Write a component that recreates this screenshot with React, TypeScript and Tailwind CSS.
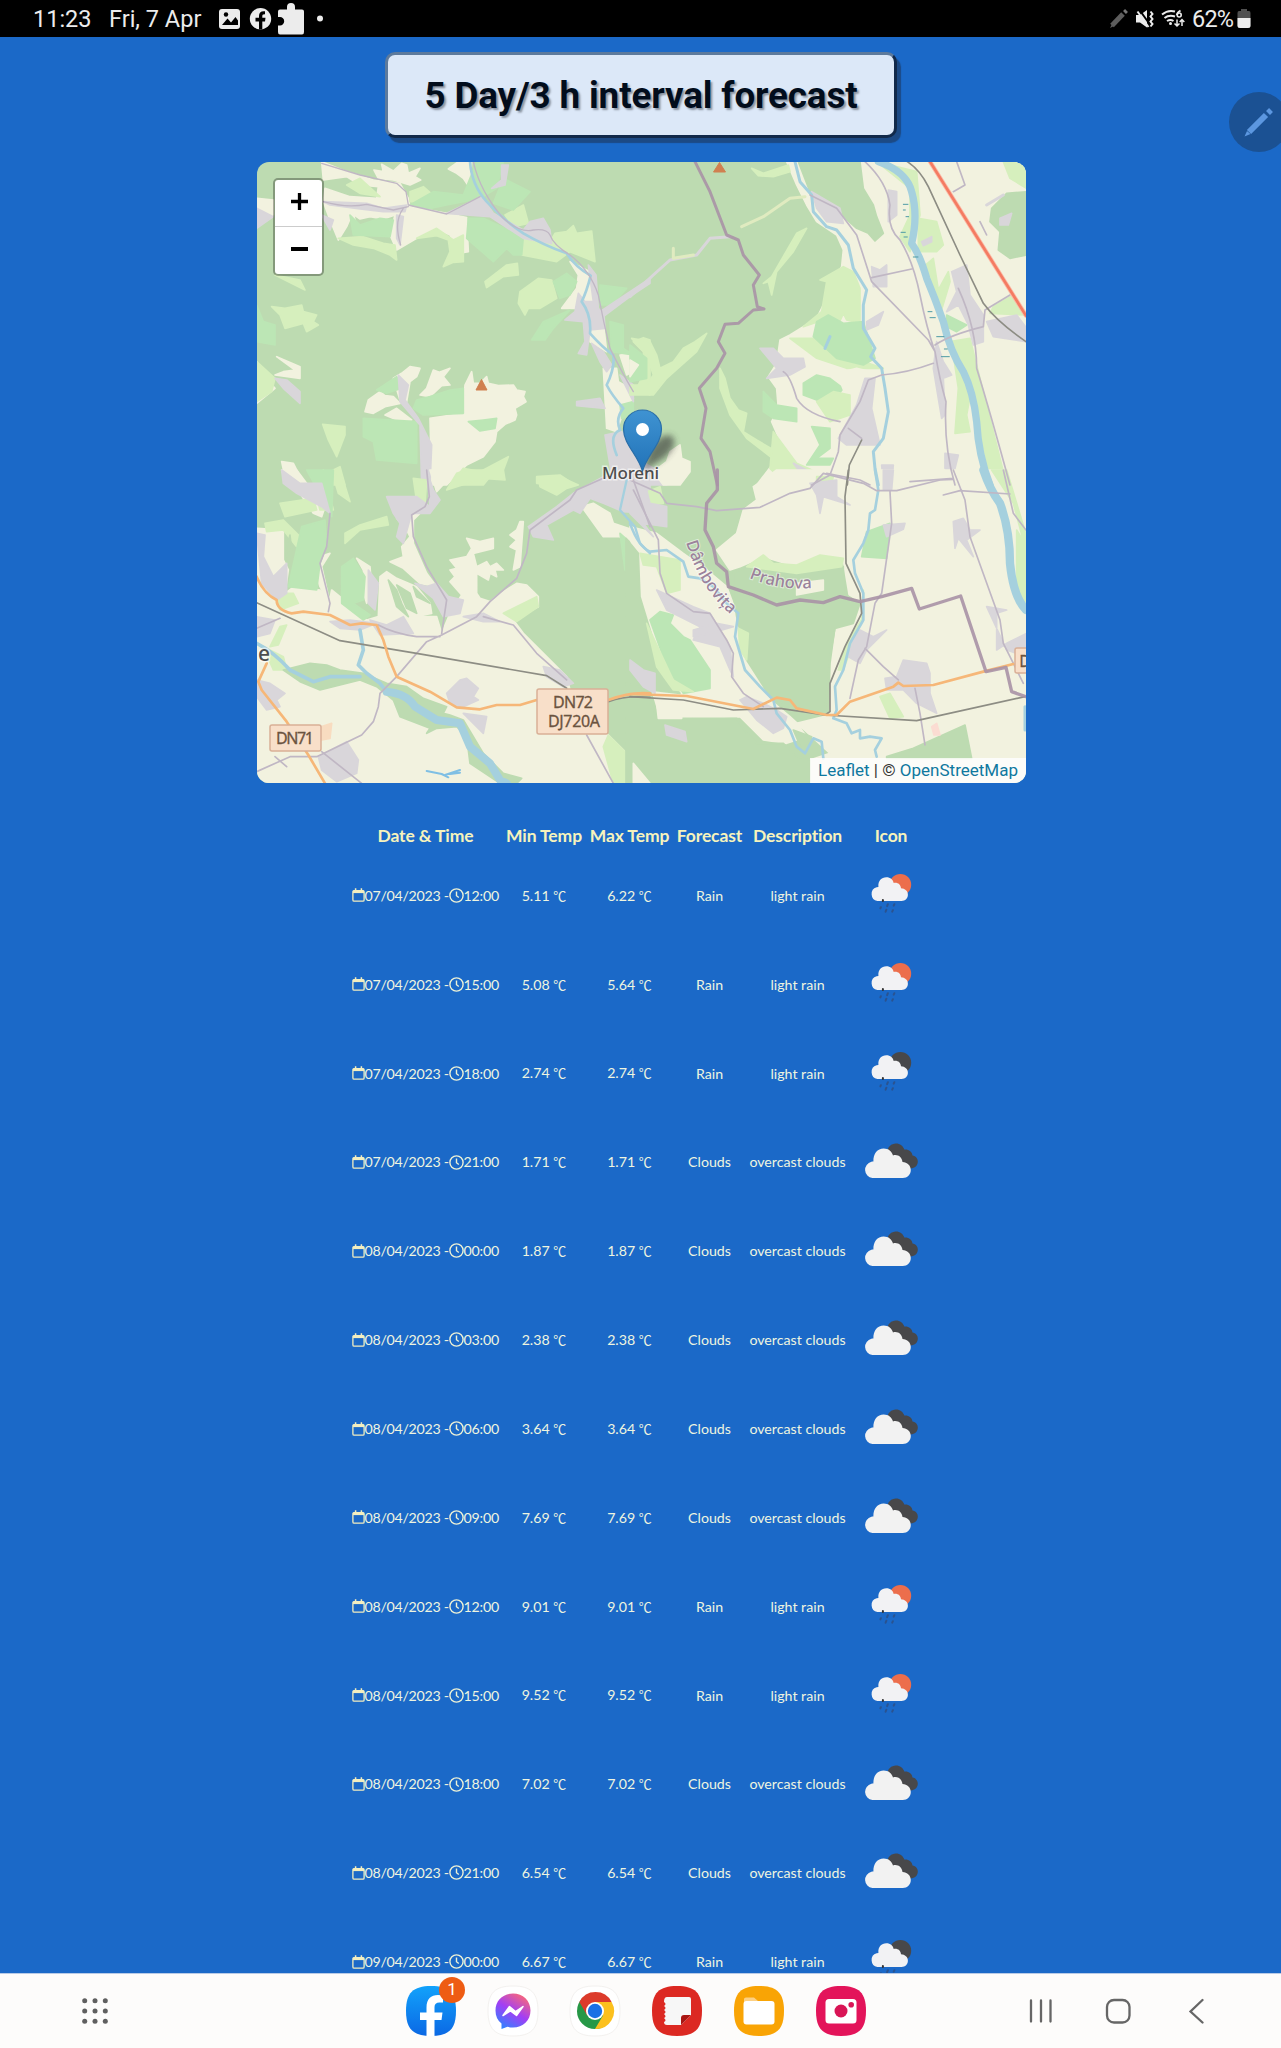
import React from "react";

type Shape = { c: string; d: string };
type Line = { c: string; w: number; d: string; o?: number };

const FOREST = "#bddbb1";
const FIELD = "#f2f2df";
const GRASS = "#d6efbd";
const ORCHARD = "#bce6b5";
const TOWN = "#d9d6da";
const WATER = "#a5d0de";
const ROAD = "#c0b7c4";
const MAIN = "#f6b778";
const RAIL = "#8d8d84";
const BORDER = "#a892a6";

// Land use, by map quadrant
const nwAreas: Shape[] = [
  { c: FIELD, d: "M215 20L290 50 370 75 450 85 475 130 480 155 590 175 650 188 655 290 625 295 612 262 600 240 560 222 500 250 440 285 420 240 435 180 400 192 360 185 330 192 310 178 318 205 305 180 290 215 265 255 240 195 220 140 225 100 300 125 380 130 385 95 330 90 290 65 220 75Z" },
  { c: FIELD, d: "M372 45L400 50 395 28 430 48 455 25 470 30 475 55 510 40 495 65 512 75 480 90 430 75 385 70ZM595 42L625 20 665 20 660 100 640 70 620 55Z" },
  { c: FIELD, d: "M20 130L70 135 70 180 20 190ZM80 605L150 635 150 670 75 660 100 650 135 645ZM20 620L40 660 75 700 20 745Z" },
  { c: FIELD, d: "M430 670L455 655 480 635 510 640 500 665 480 680 470 740 450 735ZM530 700L550 645 568 652 600 640 580 665 600 690 575 692 540 725 510 720 525 705ZM345 770L355 735 390 710 405 722 430 725 450 745 405 755 370 775ZM405 780L440 760 485 795 465 805Z" },
  { c: FIELD, d: "M645 690L665 650 670 685 690 685 710 665 715 685 745 692 790 690 800 705 825 710 820 725 828 740 795 760 800 780 795 795 765 808 740 830 735 860 700 905 650 930 620 960 590 990 545 990 540 790 640 775Z" },
  { c: FIELD, d: "M960 320L1020 350 1030 420 1030 450 975 460 935 460 980 400 985 360ZM1020 520L1062 520 1070 590 1020 560ZM1060 640L1100 640 1105 680 1140 700 1150 730 1120 770 1100 830 1070 820ZM1110 600L1135 598 1165 620 1165 640 1130 660Z" },
  { c: FIELD, d: "M95 920L130 925 150 965 170 990 110 990Z" },
  { c: GRASS, d: "M265 250L340 245 400 265 435 270 440 315 420 300 370 280 310 270ZM500 250L560 220 610 255 640 240 640 320 610 322 580 335 600 290 595 255 560 242ZM480 110L520 95 560 130 530 145 480 140ZM290 90L330 70 390 125 330 115Z" },
  { c: GRASS, d: "M765 180L820 150 835 205 790 215ZM820 245L900 260 915 235 950 230 970 212 980 235 1000 232 1025 228 1035 320 960 290 920 320 815 300ZM705 380L770 330 802 325 805 360 760 365 710 398ZM805 445L810 410 865 370 905 375 920 430 870 460 835 460 825 480Z" },
  { c: GRASS, d: "M75 360L150 375 165 405ZM65 455L105 460 155 450 160 470 200 480 190 500 205 510 170 530 160 505 105 520 90 480ZM218 808L285 815 285 840 260 905 235 855ZM600 990L640 940 690 950 775 905 760 945 720 965 700 990ZM860 965L930 960 960 980 930 990 860 985ZM20 620L75 670 65 710 20 740ZM250 945L270 935 285 990 250 990ZM1150 560L1180 548 1200 555 1200 720 1160 700 1185 650 1180 590Z" },
  { c: ORCHARD, d: "M680 20L760 20 740 100 690 130 590 150 540 160 480 150 550 110 640 120ZM655 190L700 190 820 245 815 300 790 300 770 280 730 320 650 250ZM760 70L840 110 790 165 730 145ZM300 180L330 210 390 190 430 195 420 245 310 240ZM910 380L950 355 980 380 960 420 930 430ZM845 555L880 500 960 465 910 520 885 555ZM20 450L40 500 75 510 75 570 20 560Z" },
  { c: ORCHARD, d: "M380 705L440 665 455 700 410 715ZM500 735L540 725 600 705 640 700 640 775 520 780 490 760ZM340 790L500 800 500 925 380 915 370 860 340 845ZM655 800L700 795 740 790 735 820 690 828ZM1050 390L1130 400 1085 450 1050 450ZM1080 500L1120 510 1120 580 1150 600 1085 590ZM1110 750L1150 740 1150 780 1115 790Z" },
  { c: TOWN, d: "M755 30L775 30 765 90 725 100 755 75ZM590 175L695 125 730 175 820 225 840 200 880 190 900 225 905 265 820 250 720 185ZM220 140L350 145 400 160 470 150 465 170 400 170 330 162 240 150ZM20 160L70 185 20 220ZM215 180L250 195 240 225ZM440 180L460 185 450 270 440 250ZM75 670L110 675 150 710 150 745 100 700ZM445 660L475 690 465 735 505 790 545 870 540 990 515 990 510 810 450 740Z" },
  { c: TOWN, d: "M1015 330L1038 360 1045 460 1062 480 1065 520 1020 525 1010 600 985 595 1005 560 1000 500 945 495 975 470 985 415 1005 440 1030 440ZM1025 565L1060 590 1085 630 1070 650 1050 620ZM1110 660L1150 690 1150 740 1140 720ZM980 740L1050 730 1065 760 980 752ZM1065 840L1115 830 1180 900 1200 990 1090 990ZM1050 470L1140 410 1200 370 1200 385 1140 425 1060 485Z" },
];

const neAreas: Shape[] = [
  { c: FIELD, d: "M470 20L500 90 530 150 560 200 620 240 640 285 635 335 610 380 590 430 560 490 520 515 480 540 450 555 440 625 415 665 440 700 445 760 425 800 460 880 430 925 380 990 1190 990 1190 20Z" },
  { c: FOREST, d: "M505 20L690 20 700 100 730 150 740 185 760 235 735 258 715 235 680 220 640 185 580 130 540 110ZM1130 115L1190 110 1190 300 1140 310 1105 285 1110 230 1080 200 1085 160Z" },
  { c: GRASS, d: "M365 40L400 55 475 30 480 50 430 65 385 62ZM640 335L670 350 690 400 690 505 650 495 640 475 620 520 580 495 520 515 575 470 590 380 570 375ZM500 235L530 220 490 290 440 350 425 420 415 380 400 385 425 365Z" },
  { c: GRASS, d: "M5 550L60 560 80 600 90 640 130 620 160 580 195 560 230 535 200 590 110 670 70 720 0 720 0 690 50 690 70 660 50 600ZM270 640L285 670 300 730 325 765 350 775 340 830 380 855 440 890 440 920 350 850 300 780 270 700ZM480 550L550 550 620 600 700 620 760 640 650 640 560 610ZM740 20L860 50 870 180 840 290 810 245 840 180 840 100ZM865 190L920 200 940 270 920 290 865 290ZM875 340L910 310 925 405 955 350 960 380 930 480 900 410ZM970 600L1030 670 1010 780 1020 830 975 835 985 700ZM960 560L1020 550 1130 990 1085 990 1040 780ZM1090 455L1150 420 1185 480 1080 475ZM1120 20L1190 20 1190 100 1140 70Z" },
  { c: ORCHARD, d: "M595 480L640 505 700 500 735 610 700 630 620 610 550 545 560 500ZM0 570L50 610 50 670 0 680ZM520 685L560 660 600 670 640 700 600 750 520 720ZM400 710L440 750 500 760 500 800 430 790 400 770ZM545 815L600 820 600 880 560 910 610 910 600 930 530 930 570 870ZM950 480L1010 510 980 530 950 515Z" },
  { c: FIELD, d: "M620 655L680 640 720 650 710 690 650 730 635 690Z" },
  { c: GRASS, d: "M560 740L610 710 660 720 660 780 600 800ZM430 830L500 925 580 960 450 970 420 940Z" },
  { c: TOWN, d: "M545 110L630 160 640 205 590 200 560 160ZM775 105L800 110 800 180 775 200ZM725 335L750 345 770 330 770 395 730 395ZM710 500L760 470 745 510 710 525ZM390 580L430 580 460 610 520 610 525 635 480 660 410 670 440 640ZM965 350L1010 330 1020 420 1060 480 1060 560 1030 570 1015 510 985 450 950 470 980 410ZM1070 500L1160 480 1190 520 1190 560 1090 545ZM705 670L735 670 725 760 750 870 650 870 625 850 680 750ZM920 560L910 640 935 790 945 780 940 670 965 660 940 620ZM490 925L560 960 540 990ZM755 930L790 930 785 990 760 990ZM945 895L985 900 970 960 945 940Z" },
  { c: TOWN, d: "M0 900L90 950 110 990 0 990ZM1110 190L1145 175 1135 210 1110 210ZM875 260L905 245 905 260 880 272Z" },
  { c: FIELD, d: "M0 615L25 630 0 665ZM70 950L110 920 120 890 150 870 155 910 180 920 180 950 150 990 100 990Z" },
];

const swAreas: Shape[] = [
  { c: FIELD, d: "M20 175L100 180 100 270 115 300 105 370 145 340 170 355 210 360 240 385 245 360 270 380 310 425 350 450 385 440 390 320 410 305 440 325 500 350 540 400 545 430 490 440 560 440 575 490 600 430 635 375 600 335 615 320 600 300 620 295 600 270 650 260 665 235 650 205 690 215 730 205 730 235 670 250 680 290 710 275 720 290 740 280 760 300 735 300 740 320 720 310 715 330 680 310 680 370 690 385 720 395 745 375 800 340 830 345 865 380 865 410 790 450 820 490 950 620 960 660 1075 795 1130 850 1160 940 20 940Z" },
  { c: FIELD, d: "M95 0L140 0 200 80 225 110 215 140 190 130 150 70 110 45ZM210 260L240 250 215 290 240 400 210 350 195 300ZM440 145L530 110 490 150 490 220 530 310 560 350 510 340 460 295 420 275 460 260 455 230 480 200 470 180ZM320 265L360 290 365 360 350 400 335 350 340 300ZM540 0L620 0 560 65ZM780 195L800 180 810 155 820 155 810 290 790 300 800 240 780 230 800 210ZM995 110L1030 100 1080 130 1090 160 1150 180 1200 250 1200 440 1165 380 1170 290 1110 200 1060 200Z" },
  { c: GRASS, d: "M90 100L190 85 200 120 105 140ZM45 160L100 150 150 200 140 230 100 180 50 185ZM250 20L270 0 300 95 265 70ZM285 190L330 165 410 140 415 165 330 180 285 220ZM490 25L530 30 525 105 500 95ZM590 60L620 10 650 0 760 0 765 30 700 25ZM865 25L930 20 985 45 950 55 920 75 870 50ZM80 370L130 370 145 400 90 420 80 400ZM60 530L90 470 110 465 85 525ZM760 430L860 380 865 410 800 455ZM40 530L100 560 110 600 70 600ZM1075 795L1130 850 1160 940 1090 940 1060 830ZM200 80L220 0 250 120 210 120Z" },
  { c: ORCHARD, d: "M155 170L225 150 230 225 210 280 200 360 115 350 135 260ZM170 0L250 0 245 140 220 90ZM275 290L310 265 345 320 340 390 310 400 360 435 340 450 275 400ZM1110 190L1155 230 1170 340 1125 300Z" },
  { c: FOREST, d: "M100 600L180 580 230 585 270 600 340 610 410 640 470 650 520 685 590 710 580 730 600 735 640 750 700 850 760 910 815 925 800 940 750 940 660 880 650 800 620 770 560 775 530 790 540 775 450 740 430 690 380 650 330 630 210 660 150 635ZM415 330L440 360 455 400 475 440 440 410ZM440 345L480 370 500 430 470 415ZM108 240L120 195 125 240 110 260ZM490 350L540 400 500 380Z" },
  { c: TOWN, d: "M20 190L45 195 40 260 70 320 110 280 110 370 80 390 35 340ZM95 0L150 40 215 40 240 130 215 110 140 70 100 40ZM410 80L500 80 540 110 530 0 550 60 570 90 540 130 485 130 460 220 440 200 450 160 430 130ZM355 300L385 340 375 420 355 400ZM495 340L530 350 560 340 595 380 640 390 630 430 580 440 550 385ZM360 450L410 465 460 440 490 490 390 495ZM20 440L75 450 60 490 20 500ZM240 455L300 450 380 460 330 480 270 475ZM640 440L700 430 750 455 700 455ZM590 670L630 630 650 625 685 655 670 680 685 690 630 715 600 700ZM640 730L710 740 700 790 670 760ZM20 630L60 640 105 670 80 690 90 710 50 720 20 680ZM205 860L290 815 325 870 320 910 260 935 215 900ZM835 170L920 110 970 70 1060 20 1200 0 1200 130 1120 125 1060 100 1020 85 990 130 970 120 890 165 910 210 850 200ZM880 590L930 600 970 640 940 650 890 620ZM1135 570L1200 590 1200 660 1160 620Z" },
  { c: "#f8dcc0", d: "M215 770L245 760 240 805 215 810Z" },
];

const seAreas: Shape[] = [
  { c: FIELD, d: "M440 0L1190 0 1190 940 540 940 540 870 600 850 480 740 420 690 330 480 320 430 290 350 230 300 160 250 80 190 40 180 0 170 10 300 30 420 60 640 90 740 160 745 330 740 400 810 470 820 530 800 500 760 600 735 605 580 620 470 670 460 665 420 640 270 600 260 500 290 400 260 330 290 300 300 260 240 320 190 340 120 380 90 370 50 400 30Z" },
  { c: FOREST, d: "M310 310L390 275 500 300 640 290 640 370 690 400 670 460 615 475 600 560 585 720 500 720 420 680 350 570 320 440 310 370ZM-12 205L25 250 30 380 100 610 150 670 60 660 -12 640ZM-12 640L60 660 60 700 85 745 320 745 350 790 380 820 460 820 500 860 540 870 540 940 -12 940ZM770 860L850 835 1005 765 1025 865 770 865ZM490 780L545 800 520 850Z" },
  { c: FIELD, d: "M10 880L60 940 10 940ZM80 700L155 690 155 745 85 745ZM500 340L580 330 580 360 500 375Z" },
  { c: ORCHARD, d: "M60 450L90 425 130 435 120 460 160 500 180 510 240 600 240 655 160 670 110 590ZM710 185L780 160 770 265 695 260Z" },
  { c: GRASS, d: "M30 250L150 270 150 360 110 370 80 290 40 285ZM50 460L130 630 190 665 130 660 80 590ZM325 475L355 490 350 570 330 540ZM560 20L610 20 600 55 560 40ZM350 290L400 255 430 280 500 285 570 255 640 265 635 290 500 310ZM650 520L700 440 700 360 695 450 640 600 625 600ZM1085 0L1130 0 1190 200 1190 250 1150 100ZM750 680L780 670 820 740 780 745ZM1160 180L1190 230 1190 420 1160 340ZM40 70L90 50 100 100 50 105Z" },
  { c: TOWN, d: "M0 0L40 20 60 100 110 110 110 170 40 160 70 200 0 130ZM80 360L190 410 240 430 300 530 310 620 300 600 270 530 190 510 210 470 110 420ZM350 680L400 700 440 720 470 740 460 775 430 790 380 750 330 690ZM190 480L260 460 310 470 240 490 190 500ZM0 570L40 600 75 610 75 670 40 650 0 600ZM105 765L165 785 170 815 110 795ZM540 40L620 30 620 80 660 105 580 80 570 130 560 75ZM690 480L730 500 770 480 710 540 690 580 655 560 670 510ZM765 625L800 620 820 570 890 580 900 610 900 670 920 730 860 700 820 660 770 660ZM970 155L1000 145 1020 180 1050 180 1010 210 1030 260 985 205 975 235ZM760 165L825 160 820 178 770 200ZM760 0L790 0 785 60 760 60ZM1070 410L1130 420 1100 430 1100 540 1130 520 1190 490 1190 560 1130 540Z" },
  { c: "#fbdcd2", d: "M905 770L920 760 930 795 912 795Z" },
];

// Rivers, roads, rails and borders, by map quadrant
const nwLines: Line[] = [
  { c: WATER, w: 8, d: "M660 20Q665 90 710 140 760 195 820 235 880 270 950 295 975 335 1022 362 1010 410 995 440 1025 480 1020 535 1060 580 1090 600 1095 640 1070 690 1085 720 1120 760 1095 790 1110 825 1075 840 1100 900 1110 990" },
  { c: ROAD, w: 4, d: "M215 25L330 60 440 85 468 110 475 150 590 177 690 125M220 140Q290 160 350 148L430 165 475 155M460 160Q430 200 452 270M670 20Q690 110 760 190 810 235 850 225 890 220 900 240 910 270 960 300 1020 345 1045 420 1060 500 1080 580 1120 660 1150 710 1155 765M590 178L700 185M1000 485L1060 475 1200 380M1065 640Q1050 700 1060 750L1075 870M455 660L475 715 455 740 515 800 525 900 535 990M1115 880L1200 990" },
];
const neLines: Line[] = [
  { c: WATER, w: 9, d: "M495 20L510 80 545 120 550 170 590 215 620 225 655 270 670 340 710 405 700 450 700 520 735 580 722 605 755 640 765 700 775 770 760 850 730 890 735 940 745 990M600 545L585 580" },
  { c: WATER, w: 22, d: "M745 20Q830 50 845 110 865 180 845 265 870 300 890 370 915 430 940 500 960 590 1000 650 1030 710 1040 800 1045 900 1080 990" },
  { c: ROAD, w: 5, d: "M705 20Q770 80 780 150 770 220 810 255 850 320 870 420 890 520 915 590 930 680 948 740 940 870 975 990M540 120L620 160 680 240 725 380 895 555 915 590M725 368L845 342M755 660Q830 655 910 625M915 570Q960 540 1060 515L1065 465 1140 420M630 800Q530 780 500 730 480 660 460 650M985 400Q1040 520 1040 640 1080 770 1140 990M755 660L715 675 690 740 630 840 625 890 600 960 545 990M655 820L695 850M590 955L690 975 720 990M970 970L840 980M980 20L1005 90 970 110M1070 240L1050 200" },
  { c: TOWN, w: 9, d: "M0 425L70 360 120 315 200 300 240 250 300 245M1070 150L1120 120" },
  { c: "#e0ebc0", w: 9, d: "M335 215L400 185 480 130 525 125M130 280V310L190 300" },
  { c: RAIL, w: 5, d: "M832 20Q870 45 895 95L990 300 1060 445Q1100 500 1188 560M695 855L658 930 652 990" },
  { c: "#fbbaa6", w: 13, d: "M900 20L1188 482" },
  { c: "#f47b62", w: 8, d: "M900 20L1188 482" },
  { c: BORDER, w: 9, o: 0.9, d: "M195 20L240 110 290 240 325 255 340 300 388 360 370 390 382 455 402 462 370 465 325 505 285 508 265 560 285 595 260 640 208 700 228 760 213 850 240 890 262 990" },
  { c: "#4d9ba5", w: 3, d: "M820 148H834M820 165H826M828 185H836M813 232H826M822 246H832M850 306H864M894 470H906M900 488H916M920 545H942M943 582H952M934 605H958" },
];
const swLines: Line[] = [
  { c: WATER, w: 11, d: "M20 520Q70 545 120 600L190 635 240 620 330 620M330 480L340 540 325 585 350 610 390 640 410 665" },
  { c: WATER, w: 24, d: "M410 665Q470 670 495 710L560 750 630 760 660 830 720 880 750 930 770 940" },
  { c: WATER, w: 7, d: "M1130 30L1110 120 1155 170 1170 220 1200 250" },
  { c: ROAD, w: 5, d: "M530 0L538 80 525 110 485 135 490 200 530 290 590 390 575 490M1070 20L980 60 960 90 840 180 830 250 800 325 720 395 680 440 575 495 530 515 440 620 390 670 385 710 370 755 335 795 200 860 120 860 20 905M240 130L230 230 210 280 240 400 235 425M385 465Q430 490 500 500L570 500M700 440L790 465 860 550 950 630M1010 795L1090 940M215 845L335 940M20 475L90 445M75 860L110 890M1150 30L1200 170" },
  { c: RAIL, w: 5, d: "M20 398L270 512 500 550 890 617 950 655M1075 695Q1130 675 1200 682" },
  { c: MAIN, w: 8, d: "M20 320Q40 370 80 390 80 420 125 430L160 425 240 435 300 465 335 460 380 465 400 510 415 560 440 620 540 665 620 712 690 718 740 705 810 705 860 690M50 580L25 635 35 660 110 755 175 855 225 940M1075 690Q1140 665 1200 670" },
  { c: "#7fbfe4", w: 6, d: "M530 903L575 912 595 922M585 915L630 900M600 912L630 908" },
];
const seLines: Line[] = [
  { c: WATER, w: 8, d: "M0 160Q25 230 60 245L110 240 160 275 175 320 210 325 250 350 290 400 325 430 315 500 345 600 390 650 430 690 440 730 480 780 500 830 525 850 550 805 575 815 580 865M735 0L745 60 735 120 720 130 715 180 700 220 670 270 675 310 700 370 700 450 660 520 640 600 615 650 620 720 610 745 650 760 665 790 690 780 690 805 720 800 755 805 735 840 740 860" },
  { c: WATER, w: 25, d: "M1060 0Q1080 60 1110 100 1140 180 1140 280 1150 380 1188 420" },
  { c: WATER, w: 9, d: "M1185 710V780" },
  { c: ROAD, w: 5, d: "M10 60L50 140 85 210 90 310 110 370 190 425 240 430 290 510 310 550 305 620 340 670 400 710M0 30L90 70 110 100 200 110 260 122 390 112 480 70 540 55 580 10 700 40 740 62 800 62 930 30 970 28M970 0L1005 90 1020 200 1110 450 1120 520 1180 640M780 65L785 160 755 370 735 400 710 530 685 570 660 685M705 535L760 590 805 630M855 655L870 730 885 825M940 75L990 62 1140 72M1120 0L1150 130 1188 180" },
  { c: RAIL, w: 5, d: "M655 0L645 80 648 280 690 370 695 430 645 530 600 640 600 725 585 735 450 715 310 720 160 690 0 680M585 735L860 752 1185 680" },
  { c: MAIN, w: 8, d: "M0 672L170 678 370 717 440 683 480 690 500 715 590 735 620 735 660 695 790 650 805 638 820 648 910 645 1060 605 1150 582" },
  { c: BORDER, w: 10, o: 0.9, d: "M262 0L262 60 230 100 225 180 250 230 260 280 290 305 295 350 370 375 440 405 510 390 580 398 630 380 690 395 755 380 845 355 868 417 992 378 1068 605 1128 592 1145 665 1188 680" },
];

const quads = [
  { t: "translate(0 0)", areas: nwAreas, lines: nwLines },
  { t: "translate(1140 0)", areas: neAreas, lines: neLines },
  { t: "translate(0 945)", areas: swAreas, lines: swLines },
  { t: "translate(1140 945)", areas: seAreas, lines: seLines },
];

function MapArt() {
  return (
    <svg className="block h-[621px] w-[769px]" viewBox="257 162 769 621">
      <defs>
        <linearGradient id="pin" x1="0" y1="0" x2="0" y2="1">
          <stop offset="0" stopColor="#3f93d2" />
          <stop offset="1" stopColor="#2273b8" />
        </linearGradient>
        <filter id="soft" x="-50%" y="-50%" width="200%" height="200%">
          <feGaussianBlur stdDeviation="3" />
        </filter>
        <path id="dambovita" d="M686 542Q699 587 729 613" />
        <path id="prahova" d="M749 578Q780 591 814 588" />
      </defs>
      <rect x="257" y="162" width="769" height="621" fill={FOREST} />
      <g transform="translate(250 155) scale(0.33333)">
        {quads.map((q) => (
          <g key={q.t} transform={q.t}>
            {q.areas.map((a, i) => (
              <path key={i} d={a.d} fill={a.c} stroke={a.c} strokeWidth="5" strokeLinejoin="round" />
            ))}
          </g>
        ))}
        {quads.map((q) => (
          <g key={q.t} transform={q.t} fill="none" strokeLinejoin="round" strokeLinecap="round">
            {q.lines.map((l, i) => (
              <path key={i} d={l.d} stroke={l.c} strokeWidth={l.w} opacity={l.o ?? 1} />
            ))}
          </g>
        ))}
      </g>
      <path d="M476 390L481.500 379.500 487 390ZM713.500 172L719.500 162.500 725.500 172Z" fill="#d08050" stroke="#d08050" strokeWidth="1" />
      <g fill="#f8dfc9" stroke="#d9b097" strokeWidth="1.500">
        <rect x="537" y="689" width="71" height="45" rx="2" />
        <rect x="270" y="725" width="51" height="26" rx="2" />
        <rect x="1015" y="648" width="30" height="25" rx="2" />
      </g>
      <g fontFamily="'Noto Sans', sans-serif" fill="#6b5340" stroke="#6b5340" strokeWidth="0.300" fontSize="16" textAnchor="middle">
        <text x="573" y="708" textLength="40">DN72</text>
        <text x="574" y="727" textLength="52">DJ720A</text>
        <text x="295" y="744" textLength="38">DN71</text>
        <text x="1025" y="667">D</text>
      </g>
      <g fontFamily="'Noto Sans', sans-serif" fontWeight="500" fill="#4d4d4d" stroke="#fff" strokeOpacity="0.6" strokeWidth="3" paintOrder="stroke">
        <text x="602" y="479" fontSize="17" textLength="57">Moreni</text>
        <text x="258" y="661" fontSize="21">e</text>
      </g>
      <g fontFamily="'Noto Sans', sans-serif" fontSize="16.500" fontWeight="500" fill="#9b829b" stroke="#fff" strokeOpacity="0.5" strokeWidth="2" paintOrder="stroke">
        <text><textPath href="#dambovita">Dâmbovița</textPath></text>
        <text><textPath href="#prahova">Prahova</textPath></text>
      </g>
      <path d="M643 471L650 448Q662 432 672 436 679 445 664 458Z" fill="#333" opacity="0.6" filter="url(#soft)" />
      <path d="M642.500 471C638 455 623.500 444 623.500 429a19 19 0 0 1 38 0C661.500 444 647 455 642.500 471Z" fill="url(#pin)" stroke="#2a6ea8" strokeWidth="1.200" />
      <circle cx="642.500" cy="429.500" r="6.500" fill="#fff" />
    </svg>
  );
}

function RainIcon({ night }: { night: boolean }) {
  return (
    <svg className="block h-[88.86px] w-[83px]" viewBox="850.6 851.3 83 88.86">
      <circle cx="901" cy="885" r="10.800" fill={night ? "#48484a" : "#ec6e4c"} />
      <path d="M878 901.200a7 7 0 0 1-.8-13.600 6 6 0 0 1 1.800-.3C878.500 881 882 877.500 887 877.500c4 0 6.500 2.300 7.300 5.700 4-.8 7 1.500 7.300 5.400 4 .2 6.900 2.700 6.900 6.400 0 3.600-2.700 6.200-6.300 6.200Z" fill="#f2f2f4" />
      <path d="M883.500 900.200v1" stroke="#333" strokeWidth="2" strokeLinecap="round" />
      <path d="M888.500 904.500l-.8 2M895 904.500l-.7 1.500M881.500 907.500l-.5 1.200M887 910l-.8 2M893.500 910.500l-.7 1.500" stroke="#2a5390" strokeWidth="2" strokeLinecap="round" />
    </svg>
  );
}

function CloudIcon() {
  return (
    <svg className="block h-[88.86px] w-[83px]" viewBox="850.6 1117.9 83 88.86">
      <path d="M888 1152c0-5 4-8.500 8.500-8.500 4.200 0 7.300 2.600 8.400 6 4.500-.4 7.700 2 8.200 6 3.200.5 5.300 3 5.300 6 0 4-3 6.800-7 6.800h-14Z" fill="#48484a" />
      <path d="M873 1178a8.300 8.300 0 0 1-1-16.300c.6-.2 1.200-.2 2-.2-.3-8 4-13.200 10.300-13.200 4.800 0 8.200 2.800 9.300 7 5-1.300 9 1.700 9.500 6.700 4.800.3 8.300 3.500 8.300 8 0 4.700-3.500 8-8 8Z" fill="#f2f2f2" />
    </svg>
  );
}

type Row = [string, string, string, string, string];
const rows: Row[] = [
  ["07/04/2023", "12:00", "5.11", "6.22", "day"],
  ["07/04/2023", "15:00", "5.08", "5.64", "day"],
  ["07/04/2023", "18:00", "2.74", "2.74", "night"],
  ["07/04/2023", "21:00", "1.71", "1.71", "cloud"],
  ["08/04/2023", "00:00", "1.87", "1.87", "cloud"],
  ["08/04/2023", "03:00", "2.38", "2.38", "cloud"],
  ["08/04/2023", "06:00", "3.64", "3.64", "cloud"],
  ["08/04/2023", "09:00", "7.69", "7.69", "cloud"],
  ["08/04/2023", "12:00", "9.01", "9.01", "day"],
  ["08/04/2023", "15:00", "9.52", "9.52", "day"],
  ["08/04/2023", "18:00", "7.02", "7.02", "cloud"],
  ["08/04/2023", "21:00", "6.54", "6.54", "cloud"],
  ["09/04/2023", "00:00", "6.67", "6.67", "night"],
];

function Calendar() {
  return (
    <svg className="h-[14px] w-[13px] shrink-0" viewBox="0 0 13 14" fill="none" stroke="#f3eec0">
      <rect x="0.900" y="2.600" width="11.200" height="10.600" rx="1.200" strokeWidth="1.300" />
      <path d="M1 3.800H12" strokeWidth="2.600" />
      <path d="M3.600 0.300V3M9.400 0.300V3" strokeWidth="1.500" />
    </svg>
  );
}

function Clock() {
  return (
    <svg className="h-[15px] w-[15px] shrink-0" viewBox="0 0 15 15" fill="none" stroke="#eef2d6" strokeWidth="1.400">
      <circle cx="7.500" cy="7.500" r="6.600" />
      <path d="M7.500 3.500V7.700L9.800 9.500" />
    </svg>
  );
}

function Temp({ value }: { value: string }) {
  return (
    <div>
      {value} <span className="text-[13px]">℃</span>
    </div>
  );
}

function Table() {
  return (
    <div className="flex flex-col font-['Lato','Noto_Sans_CJK_SC',sans-serif] text-[#eef5e0]">
      <div className="grid h-[30px] grid-cols-[154px_83px_88px_72px_104px_83px] items-center text-center text-[17.500px] leading-[30px] font-bold tracking-[-0.100px] whitespace-nowrap text-[#f6f3bd]">
        <div>Date &amp; Time</div>
        <div>Min Temp</div>
        <div>Max Temp</div>
        <div>Forecast</div>
        <div>Description</div>
        <div>Icon</div>
      </div>
      {rows.map(([date, time, min, max, kind]) => (
        <div
          key={date + time}
          className="grid h-[88.86px] shrink-0 grid-cols-[154px_83px_88px_72px_104px_83px] items-center text-center text-[14.200px] whitespace-nowrap"
        >
          <div className="flex items-center pl-[3px]">
            <Calendar />
            <span className="w-[84px] text-left tracking-[-0.280px]">{date} -</span>
            <Clock />
            <span className="tracking-[-0.200px]">{time}</span>
          </div>
          <Temp value={min} />
          <Temp value={max} />
          <div>{kind === "cloud" ? "Clouds" : "Rain"}</div>
          <div>{kind === "cloud" ? "overcast clouds" : "light rain"}</div>
          {kind === "cloud" ? <CloudIcon /> : <RainIcon night={kind === "night"} />}
        </div>
      ))}
    </div>
  );
}

function StatusBar() {
  return (
    <header className="flex h-[37px] shrink-0 items-center justify-between bg-black pr-[30px] pl-[33px] font-['Roboto',sans-serif] text-[23.500px] text-[#ececec]">
      <div className="flex items-center">
        <span className="w-[76px] pt-[2px]">11:23</span>
        <span className="w-[109px] pt-[2px] whitespace-nowrap">Fri, 7 Apr</span>
        <svg className="h-[37px] w-[106px]" viewBox="218 0 106 37">
          <rect x="219" y="9" width="21" height="20" rx="3" fill="#ececec" />
          <path d="M222 25L227.500 18.500 231 22.500 235.500 17 238 20.500V25Z" fill="#000" />
          <circle cx="226" cy="14.500" r="2.200" fill="#000" />
          <circle cx="260.500" cy="18.700" r="10.700" fill="#ececec" />
          <path d="M259 29.500V21.500H255.500V17.800H259V16C259 12.500 261 10.800 265 11.300V14.400C262.800 14.200 262.300 15 262.300 16.500V17.800H265.500L265 21.500H262.300V29.500Z" fill="#000" />
          <path d="M280 9.500H287V7a4 4 0 0 1 8 0V9.500H302Q304 9.500 304 11.500V32Q304 34.500 302 34.500H280Q278 34.500 278 32V25.500H280a4.200 4.200 0 0 0 0-8.400H278V11.500Q278 9.500 280 9.500Z" fill="#ececec" />
          <circle cx="320" cy="18.500" r="3" fill="#ececec" />
        </svg>
      </div>
      <div className="flex items-center">
        <svg className="h-[37px] w-[82px]" viewBox="1110 0 82 37" fill="none" stroke="#ececec" strokeWidth="2">
          <path d="M1112 25.500L1123 14" stroke="#5d5d5d" strokeWidth="5" />
          <path d="M1124.500 12.500L1126.500 10.500" stroke="#777" strokeWidth="4" />
          <path d="M1110 28L1112 24 1114 26Z" fill="#5d5d5d" stroke="none" />
          <path d="M1136 15H1140L1147 10V27.500L1140 22.500H1136Z" fill="#ececec" stroke="none" />
          <path d="M1139.500 10L1151 26" stroke="#000" strokeWidth="2" />
          <path d="M1137.500 11.500L1148.500 27" strokeWidth="2" />
          <path d="M1150.500 11.500L1152.500 14 1150.500 16.500 1152.500 19 1150.500 21.500 1152.500 24 1150.500 26.500" />
          <path d="M1162 14.500Q1168 9.500 1175 11.500M1164.500 18Q1169 14.500 1175 16.500M1167 21Q1170.500 19 1173.500 21M1180.500 10.500Q1177 12.500 1177 15" />
          <circle cx="1179.200" cy="15" r="2" strokeWidth="1.600" />
          <circle cx="1170.500" cy="23.500" r="1.500" fill="#ececec" stroke="none" />
          <path d="M1177 19.500V26M1174.500 23.500L1177 26 1179.500 23.500M1182 26V19.500M1179.700 22L1182 19.500 1184.300 22" strokeWidth="1.500" />
        </svg>
        <span className="w-[45px] pt-[2px] tracking-[-0.800px]">62%</span>
        <svg className="h-[20px] w-[14px]" viewBox="0 0 14 20">
          <path d="M4 0H10V2H12Q13.500 2 13.500 4V16.500Q13.500 19 11 19H3Q0.500 19 0.500 16.500V4Q0.500 2 2 2H4Z" fill="#505050" />
          <path d="M0.500 9H13.500V16.500Q13.500 19 11 19H3Q0.500 19 0.500 16.500Z" fill="#ececec" />
        </svg>
      </div>
    </header>
  );
}

const SQUIRCLE = "M25 0C43 0 50 7 50 25S43 50 25 50 0 43 0 25 7 0 25 0Z";

function AppIcon({ fill, children, edge }: { fill: string; children: React.ReactNode; edge?: boolean }) {
  return (
    <svg className="block h-[50px] w-[50px] overflow-visible" viewBox="0 0 50 50">
      <path d={SQUIRCLE} fill={fill} stroke={edge ? "#f3f1ef" : "none"} />
      {children}
    </svg>
  );
}

function NavBar() {
  return (
    <footer className="flex h-[75px] shrink-0 items-center border-t border-[#b9cbe6] bg-[#fdfcfb] pl-[82px]">
      <svg className="h-[26px] w-[26px]" viewBox="0 0 26 26" fill="#5f5f5f">
        {[2.7, 13, 23.3].map((y) => [2.7, 13, 23.3].map((x) => <circle key={`${x}-${y}`} cx={x} cy={y} r="2.500" />))}
      </svg>
      <div className="ml-[298px] flex gap-8">
        <div className="relative">
          <AppIcon fill="url(#fb)">
            <defs>
              <linearGradient id="fb" x1="0" y1="0" x2="0" y2="1">
                <stop offset="0" stopColor="#12a2fb" />
                <stop offset="1" stopColor="#0b68e4" />
              </linearGradient>
            </defs>
            <path d="M20.500 50V34H14V26.500H20.500V21.500C20.500 13 25 9 32 9Q35 9 37 9.500V16.500H33.500Q28.500 16.500 28.500 21V26.500H36.500L35.500 34H28.500V50Z" fill="#fff" />
          </AppIcon>
          <span className="absolute -top-[9px] left-[33px] flex h-[26px] w-[26px] items-center justify-center rounded-full bg-[#ee5c13] font-['Roboto',sans-serif] text-[17px] text-white">1</span>
        </div>
        <AppIcon fill="#fff" edge>
          <defs>
            <linearGradient id="msg" x1="0.200" y1="1" x2="0.800" y2="0">
              <stop offset="0" stopColor="#2c85ff" />
              <stop offset="0.500" stopColor="#a23ef5" />
              <stop offset="1" stopColor="#ff6a72" />
            </linearGradient>
          </defs>
          <path d="M25 7.500C35 7.500 42.500 14.500 42.500 24.500S35 41.500 25 41.500Q22 41.500 19.500 40.800L13.500 43V37.500C9.500 34.500 7.500 30 7.500 24.500 7.500 14.500 15 7.500 25 7.500Z" fill="url(#msg)" />
          <path d="M15 29.500L21.500 20.500 27.500 25.500 35 20.500 28.500 29.500 22.500 24.800Z" fill="#fff" stroke="#fff" strokeWidth="1.500" strokeLinejoin="round" />
        </AppIcon>
        <AppIcon fill="#fff" edge>
          <circle cx="25" cy="25" r="18" fill="#279847" />
          <path d="M25 25L25 16H41.600A18 18 0 0 1 25 43L33 29.500Z" fill="#fcc01e" />
          <path d="M25 16H41.600A18 18 0 0 0 9.400 16L17.200 29.500Z" fill="#dc3b2b" />
          <circle cx="25" cy="25" r="9" fill="#fff" />
          <circle cx="25" cy="25" r="7.200" fill="#1a70e5" />
        </AppIcon>
        <AppIcon fill="#dc2922">
          <path d="M15 11H37Q39 11 39 13V29L29 39H15Q12 39 12 36 15 34.500 12 32 15 30.500 12 28 15 26 12 24 15 22 12 20 15 18 12 16 12 11 15 11Z" fill="#f7f7f7" />
          <path d="M29 39V32Q29 29 32 29H39Z" fill="#a91613" />
        </AppIcon>
        <AppIcon fill="#f9a405">
          <path d="M10 20V13Q10 11.500 12 11.500H20L24 15H34V20Z" fill="#fdd083" />
          <rect x="9.500" y="15" width="31" height="23.500" rx="3" fill="#fff" />
        </AppIcon>
        <AppIcon fill="#e3145a">
          <rect x="9.500" y="13" width="31" height="24.500" rx="3.500" fill="#fff" />
          <circle cx="25" cy="25" r="6.500" fill="#d91556" />
          <circle cx="35.200" cy="18.700" r="2.800" fill="#d91556" />
        </AppIcon>
      </div>
      <div className="ml-[162px] flex items-center">
        <svg className="h-[26px] w-[180px]" viewBox="1028 0 180 26" fill="none" stroke="#666" strokeWidth="2.300" strokeLinecap="round">
          <path d="M1031 2.500V23.500M1041 2.500V23.500M1050.500 2.500V23.500M1202.500 2L1190.500 13.500 1202.500 24.500" />
          <rect x="1107" y="2" width="22.500" height="22.500" rx="7" />
        </svg>
      </div>
    </footer>
  );
}

export default function App() {
  return (
    <div className="relative flex h-[2048px] w-[1281px] flex-col overflow-hidden bg-[#1b69c8]">
      <StatusBar />
      <main className="flex min-h-0 flex-1 flex-col items-center overflow-hidden pt-[15px]">
        <h1 className="ml-px flex h-[86px] w-[512px] shrink-0 items-center justify-center rounded-[10px] border-[3px] border-t-[#5d7a9c] border-r-[#11294a] border-b-[#11294a] border-l-[#5d7a9c] bg-[#dce8f8] pt-[2px] font-['Roboto',sans-serif] text-[36.800px] font-bold tracking-[-0.120px] whitespace-nowrap text-[#020d1c] shadow-[4px_5px_1px_#1c4a85] [text-shadow:2px_2px_2px_#8a93a0]">
          5 Day/3 h interval forecast
        </h1>
        <section className="relative mt-[24px] ml-[2px] h-[621px] w-[769px] shrink-0 overflow-hidden rounded-[12px]">
          <MapArt />
          <div className="absolute top-[16px] left-[16px] flex w-[51px] flex-col rounded-[5px] border-2 border-black/30 bg-white bg-clip-padding">
            <button className="flex h-[47px] items-center justify-center border-b border-[#ccc] pb-[4px] pl-[2px]">
              <svg className="h-[17px] w-[17px]" viewBox="0 0 17 17" stroke="#000" strokeWidth="3.300">
                <path d="M0 8.500H17M8.500 0V17" />
              </svg>
            </button>
            <button className="flex h-[47px] items-center justify-center pl-[2px]">
              <svg className="h-[17px] w-[17px]" viewBox="0 0 17 17" stroke="#000" strokeWidth="4">
                <path d="M0 7H17" />
              </svg>
            </button>
          </div>
          <div className="absolute right-0 bottom-0 h-[25px] w-[216px] bg-white/80 pl-[8px] font-['Roboto',sans-serif] text-[17px] leading-[25px] whitespace-nowrap text-[#333]">
            <span className="text-[#0f789f]">Leaflet</span> | © <span className="text-[#0f789f]">OpenStreetMap</span>
          </div>
        </section>
        <div className="mt-[38px]">
          <Table />
        </div>
      </main>
      <NavBar />
      <div className="absolute top-[92px] left-[1229px] flex h-[60px] w-[60px] items-center justify-center rounded-full bg-[#1b5193]">
        <svg className="h-[32px] w-[32px]" viewBox="0 0 32 32" fill="none" stroke="#5c97e0">
          <path d="M6 26L23 9" strokeWidth="6" />
          <path d="M25.500 6.500L28.500 3.500" strokeWidth="5.500" transform="translate(-.5 .5)" />
          <path d="M1.500 30.500L4 25 7.500 28Z" fill="#5c97e0" stroke="none" />
        </svg>
      </div>
    </div>
  );
}
